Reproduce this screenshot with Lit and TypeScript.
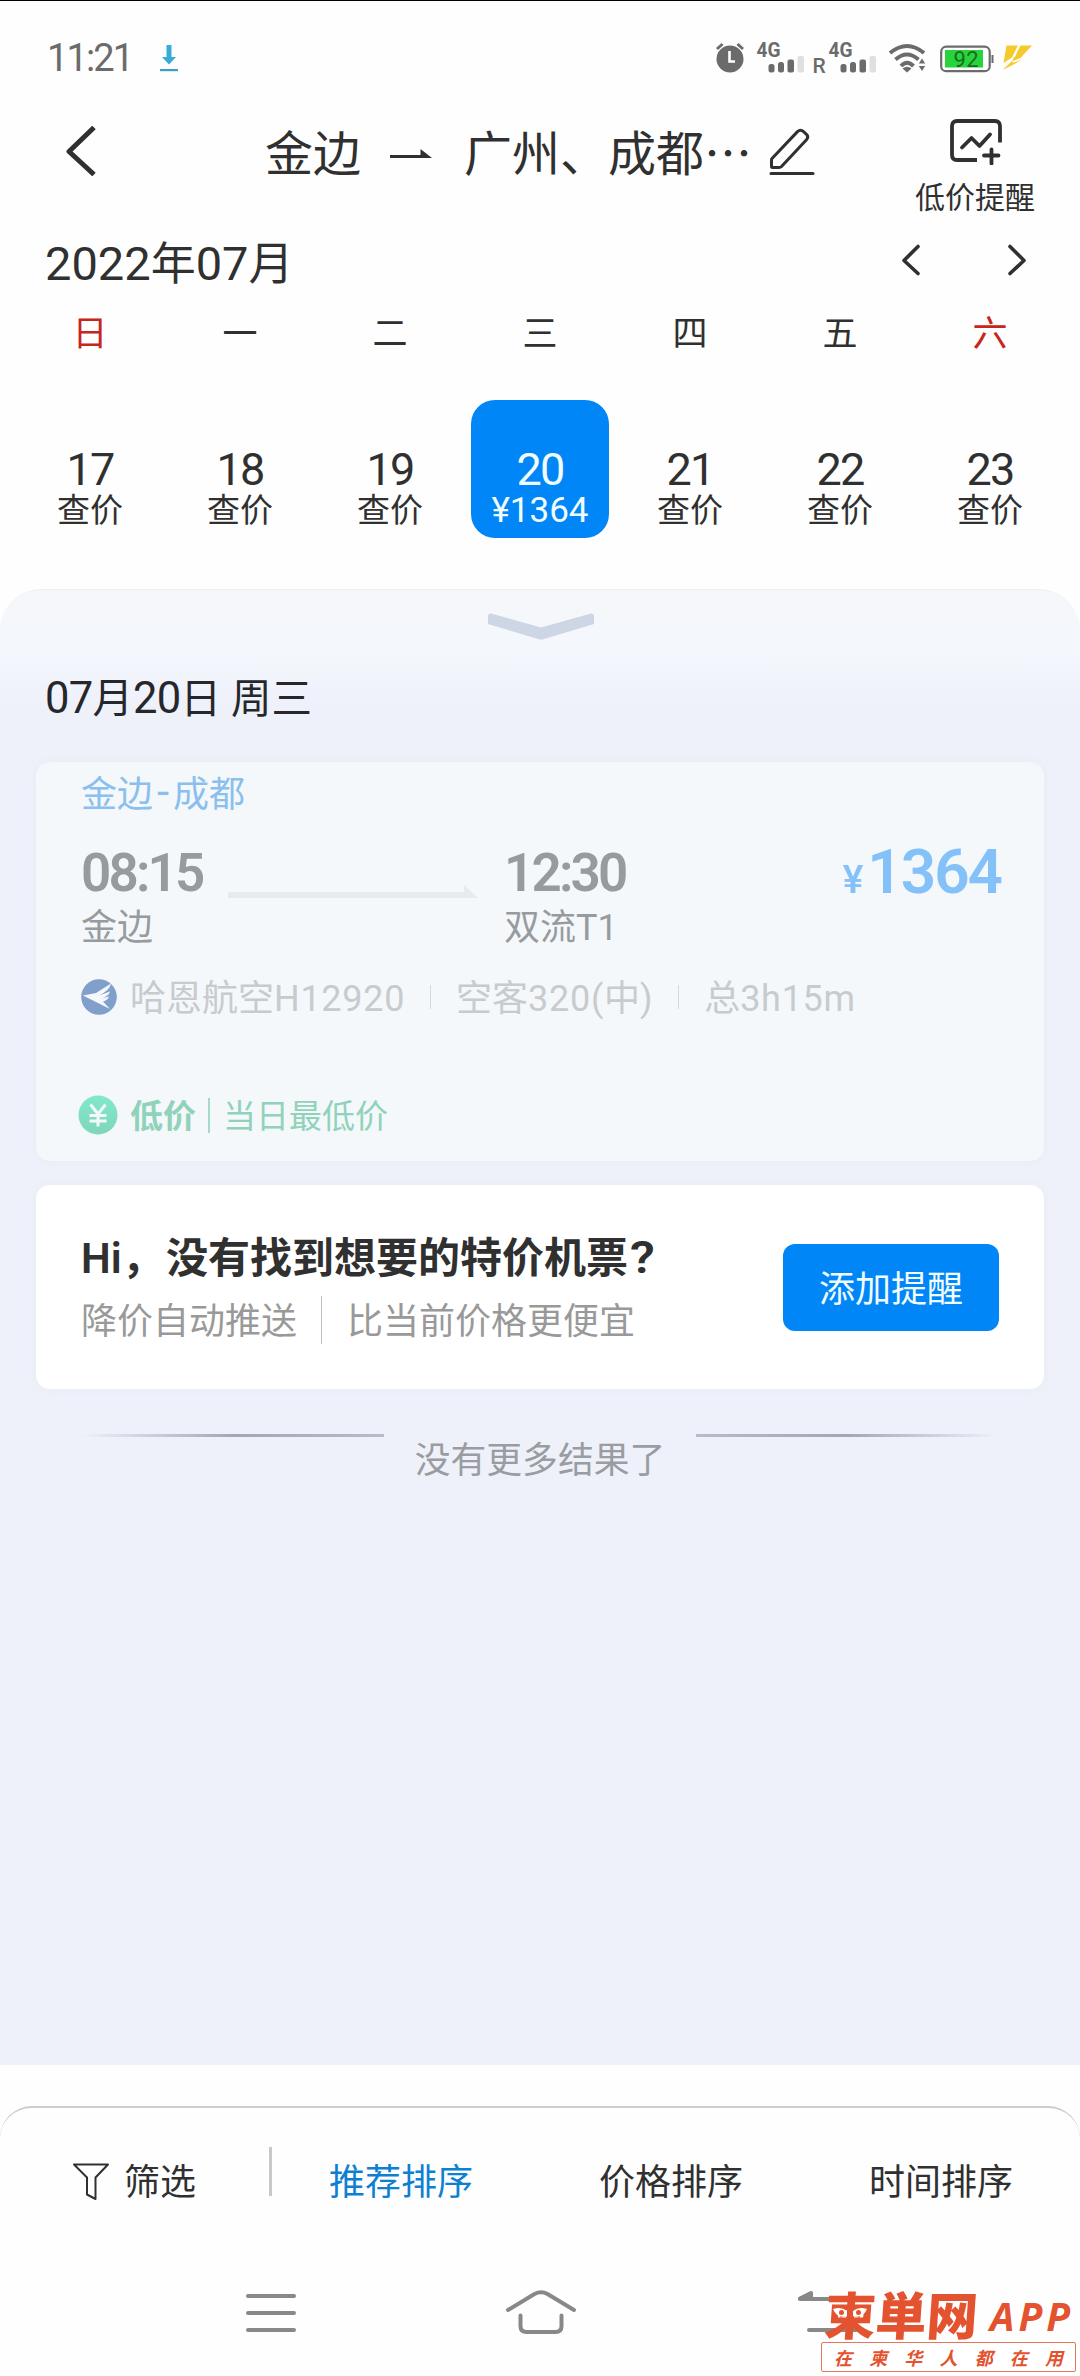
import { LitElement, html, css, svg } from "lit";
import { customElement } from "lit/decorators.js";
import { classMap } from "lit/directives/class-map.js";

interface Day {
  week: string;
  date: string;
  label: string;
  weekend?: boolean;
  selected?: boolean;
}

const DAYS: Day[] = [
  { week: "日", date: "17", label: "查价", weekend: true },
  { week: "一", date: "18", label: "查价" },
  { week: "二", date: "19", label: "查价" },
  { week: "三", date: "20", label: "¥1364", selected: true },
  { week: "四", date: "21", label: "查价" },
  { week: "五", date: "22", label: "查价" },
  { week: "六", date: "23", label: "查价", weekend: true },
];

@customElement("status-bar")
export class StatusBar extends LitElement {
  static styles = css`
    :host {
      display: flex;
      align-items: center;
      height: 114px;
      color: #6b6b6b;
    }
    .time {
      width: 88px;
      margin-left: 47px;
      font-size: 38px;
      letter-spacing: -1.9px;
      line-height: 46px;
    }
    .download {
      margin-left: 24px;
    }
    .icons {
      display: flex;
      margin-left: auto;
      margin-right: 47px;
    }
    svg {
      display: block;
    }
    .net {
      font: 700 21px Roboto, sans-serif;
    }
    .roam {
      font: 500 21px Roboto, sans-serif;
    }
    .pct {
      font: 400 22px Roboto, sans-serif;
    }
  `;

  private signal(x: number) {
    return svg`
      <text class="net" x=${x} y="17.500" textLength="24" lengthAdjust="spacingAndGlyphs" fill="#6b6b6b">4G</text>
      <rect x=${x + 12} y="25" width="6" height="8.500" rx="2.5" fill="#6b6b6b"/>
      <rect x=${x + 21.5} y="23" width="6" height="10.500" rx="2.5" fill="#6b6b6b"/>
      <rect x=${x + 31} y="20.500" width="6.5" height="13" rx="2" fill="#6b6b6b"/>
      <rect x=${x + 41} y="17" width="6.5" height="16.500" rx="2" fill="#e0e0e0"/>`;
  }

  render() {
    return html`
      <span class="time">11:21</span>
      <svg class="download" width="20" height="30" viewBox="0 0 20 30">
        <path d="M7.5 2h5v12h4.5L10 21.500 3 14h4.500z" fill="#38acd4" />
        <rect x="1" y="26" width="18" height="2.200" fill="#3d9fc0" />
      </svg>
      <div class="icons">
        <svg width="322" height="38" viewBox="0 0 322 38">
          <g transform="translate(4 0)">
            <circle cx="15" cy="20" r="13.500" fill="#6b6b6b" />
            <path d="M2 10 7.500 5M22.500 5l5.500 5" stroke="#6b6b6b" stroke-width="3" />
            <path d="M14.500 12v10.500h5.500" stroke="#fff" stroke-width="2.600" fill="none" />
          </g>
          ${this.signal(45.5)}
          <text class="roam" x="101.500" y="33.500" fill="#6b6b6b">R</text>
          ${this.signal(117.5)}
          <g fill="none" stroke="#6b6b6b" stroke-width="4">
            <path d="M179 14Q196 0 213 14" />
            <path d="M184.500 20.500Q196 10.500 207.500 20.500" />
            <path d="M190 27Q196 20.500 202.500 27" />
          </g>
          <path d="M191.500 29.500q4.500-3.500 9 0l-4.500 4z" fill="#6b6b6b" />
          <path d="M211 19.500l3.200 5h-6.400zM211 32l3.200-5h-6.400z" fill="#6b6b6b" />
          <rect x="230.200" y="7.700" width="48.500" height="24.500" rx="5" fill="#fff" stroke="#6b6b6b" stroke-width="2.200" />
          <rect x="234" y="11" width="38" height="17.500" fill="#27d43c" />
          <rect x="280.500" y="16" width="2" height="8" fill="#6b6b6b" />
          <text class="pct" x="242.500" y="28" textLength="25" fill="#1b6b22">92</text>
          <path d="M295.500 6.500H307L301 18.500 292.500 24z" fill="#f4cb2a" />
          <path d="M309.500 6.500H321L309 19.500 311 20.500 303.500 25 291.500 31 301.500 21.500 303 18z" fill="#f4cb2a" />
          <path d="M308.500 5.500l-5.500 12.500M311 19.500l-9.500 3.500" stroke="#fefefe" stroke-width="1.800" />
        </svg>
      </div>
    `;
  }
}

@customElement("route-header")
export class RouteHeader extends LitElement {
  static styles = css`
    :host {
      display: flex;
      align-items: flex-start;
      height: 110px;
      color: #303030;
    }
    svg {
      display: block;
      fill: none;
      stroke: #303030;
    }
    .back {
      margin: 11px 0 0 64px;
    }
    .route {
      display: flex;
      align-items: center;
      height: 74px;
      margin-left: 167px;
      font-family: "Noto Sans CJK SC", sans-serif;
      font-size: 48px;
      line-height: 70px;
      white-space: nowrap;
    }
    .route span {
      height: 74px;
    }
    .arrow {
      margin: 3px 32px 0 29px;
    }
    .to {
      width: 305px;
    }
    .edit {
      margin-top: -3px;
    }
    .alert {
      display: flex;
      flex-direction: column;
      align-items: center;
      width: 122px;
      margin: 3px 0 0 99px;
      font-size: 30px;
      line-height: 42px;
    }
    .alert svg {
      margin: 0 0 12px 2px;
    }
  `;

  render() {
    return html`
      <svg class="back" width="34" height="50" viewBox="0 0 34 50">
        <path d="M30 1.500 5 25.500 30 48.500" stroke-width="5" stroke-linejoin="round" />
      </svg>
      <div class="route">
        <span>金边</span>
        <svg class="arrow" width="42" height="10" viewBox="0 0 42 10">
          <path d="M0 7.500h34" stroke-width="3" />
          <path d="M30.500 0 42 9H30.500z" fill="#303030" stroke="none" />
        </svg>
        <span class="to">广州、成都⋯</span>
        <svg class="edit" width="46" height="48" viewBox="0 0 46 48">
          <path d="M2 46.500h42" stroke-width="3" stroke-linecap="round" />
          <path
            d="M3 31.500 28.500 4.600Q31.500 2 34.500 4.600L37.500 7.300Q40 10 37.500 12.800L12.500 39.500Q11.500 40.500 10 40.500H3.500Q2.500 40.500 2.500 39.300V33Q2.500 32 3 31.500z"
            stroke-width="3"
            stroke-linejoin="round"
          />
        </svg>
      </div>
      <div class="alert">
        <svg width="54" height="47" viewBox="0 0 54 47">
          <g stroke-width="3.800">
            <path d="M51 24.500V8Q51 3 46 3H8Q3 3 3 8V37Q3 42 8 42H28" />
            <path d="M13 29.500 22.500 20 30.500 28 41 16.500" stroke-linejoin="round" stroke-linecap="round" />
            <path d="M42.500 31.500v14M35 37.500h14.500" stroke-linecap="round" />
          </g>
        </svg>
        <span>低价提醒</span>
      </div>
    `;
  }
}

@customElement("week-calendar")
export class WeekCalendar extends LitElement {
  static styles = css`
    :host {
      display: block;
      color: #303030;
    }
    .month {
      display: flex;
      align-items: center;
      height: 74px;
      padding: 0 53px 0 45px;
      font-size: 45px;
      line-height: 77px;
    }
    .num {
      font-size: 47px;
    }
    .nav {
      display: flex;
      gap: 86px;
      margin: -4px 0 0 auto;
    }
    svg {
      display: block;
      fill: none;
      stroke: #303030;
      stroke-width: 3.6;
      stroke-linecap: round;
      stroke-linejoin: round;
    }
    .text {
      height: 74px;
    }
    .grid {
      display: grid;
      grid-template-columns: repeat(7, 150px);
      justify-content: center;
      justify-items: center;
    }
    .week {
      padding-top: 2px;
      font-size: 35px;
      line-height: 68px;
    }
    .weekend {
      color: #c8251c;
    }
    .days {
      margin-top: 31px;
    }
    .day {
      box-sizing: border-box;
      display: flex;
      flex-direction: column;
      align-items: center;
      width: 138px;
      height: 138px;
      padding-top: 49px;
      border-radius: 24px;
    }
    .date {
      font-size: 45px;
      line-height: 42px;
      letter-spacing: -1.8px;
    }
    .label {
      font-size: 33px;
      line-height: 39px;
    }
    .selected {
      background: #0086f6;
      color: #f0fcff;
    }
    .selected .label {
      font-size: 35px;
    }
  `;

  render() {
    return html`
      <div class="month">
        <span class="text"><span class="num">2022</span>年<span class="num">07</span>月</span>
        <div class="nav">
          <svg width="20" height="32" viewBox="0 0 20 32"><path d="M17 2.500 3 16.500 17 29.500" /></svg>
          <svg width="20" height="32" viewBox="0 0 20 32"><path d="M3 2.500 17 16.500 3 29.500" /></svg>
        </div>
      </div>
      <div class="grid">
        ${DAYS.map((d) => html`<span class=${classMap({ week: true, weekend: !!d.weekend })}>${d.week}</span>`)}
      </div>
      <div class="grid days">
        ${DAYS.map(
          (d) => html`<div class=${classMap({ day: true, selected: !!d.selected })}>
            <span class="date">${d.date}</span>
            <span class="label">${d.label}</span>
          </div>`
        )}
      </div>
    `;
  }
}

@customElement("flight-card")
export class FlightCard extends LitElement {
  static styles = css`
    :host {
      box-sizing: border-box;
      display: block;
      height: 399px;
      padding: 9px 45px 0 45px;
      border-radius: 14px;
      background: #f4f8fb;
      box-shadow: 0 0 6px rgba(225, 232, 236, 0.5);
      font-size: 36px;
      white-space: nowrap;
    }
    svg {
      display: block;
    }
    .route {
      color: #8abfee;
      line-height: 48px;
    }
    .dash {
      display: inline-block;
      width: 20px;
      font-size: 44px;
      line-height: 40px;
      text-align: center;
    }
    .times {
      display: flex;
      margin-top: 22px;
      color: #979b9e;
    }
    .stop {
      display: flex;
      flex-direction: column;
      line-height: 47px;
    }
    .from {
      width: 147px;
    }
    .clock {
      font-size: 53px;
      font-weight: 600;
      line-height: 64px;
      letter-spacing: -2.8px;
    }
    .line {
      margin: 44px 26px 0 0;
    }
    .price {
      margin: -1px -2px 0 auto;
      color: #84c1f8;
      font-weight: 600;
      font-size: 62px;
      line-height: 64px;
      letter-spacing: -2px;
    }
    .yen {
      margin-right: 6px;
      font-size: 39px;
      font-weight: 500;
    }
    .meta {
      display: flex;
      align-items: center;
      height: 46px;
      margin-top: 22px;
      color: #c8cbce;
      line-height: 50px;
    }
    .meta span {
      height: 46px;
    }
    .lat {
      letter-spacing: 0.7px;
    }
    .airline {
      margin-left: 13px;
    }
    .sep {
      width: 1px;
      height: 24px;
      margin: 0 25px 0 25px;
      background: #d5d9dc;
    }
    .tag {
      display: flex;
      align-items: center;
      height: 46px;
      margin: 72px 0 0 -3px;
      font-size: 33px;
      line-height: 49px;
      color: #90d2ba;
    }
    .tag span {
      height: 46px;
    }
    .low {
      margin-left: 12px;
      font-weight: 700;
    }
    .bar {
      width: 2px;
      height: 35px;
      margin: 0 13px 0 12px;
      background: #a5dac6;
    }
  `;

  render() {
    return html`
      <div class="route">金边<span class="dash">-</span>成都</div>
      <div class="times">
        <div class="stop from"><span class="clock">08:15</span><span>金边</span></div>
        <svg class="line" width="250" height="14" viewBox="0 0 250 14">
          <path d="M0 7h236V0l14 13H0z" fill="#e7ebed" />
        </svg>
        <div class="stop"><span class="clock">12:30</span><span>双流T1</span></div>
        <div class="price"><span class="yen">¥</span>1364</div>
      </div>
      <div class="meta">
        <svg width="36" height="36" viewBox="0 0 36 36">
          <circle cx="18" cy="18" r="17.800" fill="#809fcb" />
          <path d="M2 16.500 15 14 30 4.500Q29 11 18 16.500L29 12.500Q28 17 20 19.500L28 17.500Q27 21 22 22.500L29 30Z" fill="#f4f8fb" />
        </svg>
        <span class="airline">哈恩航空<span class="lat">H12920</span></span>
        <i class="sep"></i>
        <span>空客<span class="lat">320(</span>中<span class="lat">)</span></span>
        <i class="sep"></i>
        <span>总<span class="lat">3h15m</span></span>
      </div>
      <div class="tag">
        <svg width="40" height="40" viewBox="0 0 40 40">
          <defs>
            <linearGradient id="coin" x1="0" y1="0" x2="0" y2="1">
              <stop offset="0" stop-color="#82e8cc" />
              <stop offset="1" stop-color="#7fd6ba" />
            </linearGradient>
          </defs>
          <circle cx="20" cy="20" r="19.500" fill="url(#coin)" />
          <path d="M12.500 9.500 20 19 27.500 9.500M20 19V31.500M11.500 20.500h17M11.500 26h17" fill="none" stroke="#f4f8fb" stroke-width="3" />
        </svg>
        <span class="low">低价</span>
        <i class="bar"></i>
        <span>当日最低价</span>
      </div>
    `;
  }
}

@customElement("remind-card")
export class RemindCard extends LitElement {
  static styles = css`
    :host {
      box-sizing: border-box;
      display: flex;
      justify-content: space-between;
      height: 204px;
      padding: 43px 45px 0 45px;
      border-radius: 14px;
      background: #fff;
      box-shadow: 0 0 6px rgba(225, 232, 236, 0.5);
      white-space: nowrap;
    }
    .title {
      height: 60px;
      color: #303030;
      font-size: 42px;
      font-weight: 600;
      line-height: 62px;
    }
    .hi {
      display: inline-block;
      width: 85px;
      white-space: nowrap;
    }
    .ask {
      display: inline-block;
      font-size: 45px;
      transform-origin: left;
      transform: translateX(2px) scaleX(1.12);
      line-height: 50px;
    }
    .sub {
      display: flex;
      align-items: center;
      height: 48px;
      margin-top: 8px;
      color: #999;
      font-size: 36px;
      line-height: 53px;
    }
    .sub span {
      height: 48px;
    }
    .sep {
      width: 1px;
      height: 48px;
      margin: 0 25px 0 24px;
      background: #bdbdbd;
    }
    .button {
      width: 216px;
      height: 87px;
      margin-top: 16px;
      border-radius: 12px;
      background: #0086f6;
      color: #f0fcff;
      font-size: 36px;
      line-height: 93px;
      text-align: center;
    }
  `;

  render() {
    return html`
      <div>
        <div class="title"><span class="hi">Hi，</span>没有找到想要的特价机票<span class="ask">?</span></div>
        <div class="sub"><span>降价自动推送</span><i class="sep"></i><span>比当前价格更便宜</span></div>
      </div>
      <div class="button">添加提醒</div>
    `;
  }
}

@customElement("sort-bar")
export class SortBar extends LitElement {
  static styles = css`
    :host {
      box-sizing: border-box;
      display: flex;
      height: 150px;
      margin-top: 41px;
      border-top: 2px solid #cdcdcd;
      border-radius: 32px 32px 0 0;
      color: #303030;
      font-size: 36px;
      line-height: 150px;
      white-space: nowrap;
    }
    .filter {
      box-sizing: border-box;
      display: flex;
      align-items: center;
      width: 269px;
      padding-left: 72px;
      height: 148px;
    }
    .filter svg {
      display: block;
      margin-right: 14px;
    }
    .filter span {
      height: 148px;
    }
    .sep {
      width: 3px;
      height: 49px;
      margin: 39px -6px 0 0;
      background: #c8c8c8;
    }
    .item {
      width: 270px;
      text-align: center;
    }
    .active {
      color: #0d80d2;
    }
  `;

  render() {
    return html`
      <div class="filter">
        <svg width="38" height="38" viewBox="0 0 38 38" fill="none" stroke="#303030" stroke-width="2">
          <path d="M2 1.500H36L23.500 14.500V36L15 31.500V14.500z" stroke-linejoin="round" />
        </svg>
        <span>筛选</span>
      </div>
      <i class="sep"></i>
      <span class="item active">推荐排序</span>
      <span class="item">价格排序</span>
      <span class="item">时间排序</span>
    `;
  }
}

@customElement("brand-mark")
export class BrandMark extends LitElement {
  static styles = css`
    :host {
      display: block;
      width: 256px;
      height: 86px;
      color: #e4532f;
    }
    .top {
      position: relative;
      display: flex;
      height: 54px;
      white-space: nowrap;
    }
    .name {
      width: 163px;
      margin-left: 4px;
      font: 900 51px/50px "Noto Sans CJK SC", sans-serif;
      transform: skewX(-4deg);
    }
    .eyes {
      position: absolute;
      left: 10px;
      top: 18px;
    }
    .app {
      padding-top: 8px;
      margin-left: 2px;
      font: italic 700 39px/40px "Open Sans", sans-serif;
      letter-spacing: 4px;
    }
    .slogan {
      box-sizing: border-box;
      display: flex;
      justify-content: space-between;
      width: 255px;
      height: 30px;
      padding: 0 12px;
      border: 1px solid #e4765a;
      border-radius: 2px;
      background: #fff;
      font: italic 700 18px/28px "Noto Sans CJK SC", sans-serif;
    }
  `;

  render() {
    return html`
      <div class="top">
        <span class="name">柬単网</span>
        <svg class="eyes" width="38" height="14" viewBox="0 0 38 14">
          <path d="M2 3Q10 0 16 5V10Q6 13 2 3zM36 3Q28 0 22 5V10Q32 13 36 3z" fill="#fff" />
          <circle cx="10.500" cy="6.500" r="2.500" fill="#e4532f" />
          <circle cx="27.500" cy="6.500" r="2.500" fill="#e4532f" />
        </svg>
        <span class="app">APP</span>
      </div>
      <div class="slogan">${[..."在柬华人都在用"].map((c) => html`<span>${c}</span>`)}</div>
    `;
  }
}

@customElement("app-root")
export class AppRoot extends LitElement {
  static styles = css`
    :host {
      position: relative;
      box-sizing: border-box;
      display: block;
      width: 1080px;
      height: 2376px;
      overflow: hidden;
      border-top: 1px solid #000;
      background: #fefefe;
      font-family: Roboto, "Noto Sans CJK SC", sans-serif;
    }
    svg {
      display: block;
    }
    .panel {
      box-sizing: border-box;
      height: 1476px;
      margin-top: 51px;
      padding: 23px 36px 0;
      border-top: 1px solid #efeff2;
      border-radius: 42px 42px 0 0;
      background: linear-gradient(#f5f7fa 0, #f4f7fc 60px, #eef1fa 115px, #eef1fa 100%);
    }
    .handle {
      margin: 0 auto;
      transform: translateX(1px);
    }
    .date {
      margin: 29px 0 33px 9px;
      color: #26272b;
      font-size: 40.5px;
      line-height: 60px;
    }
    .num {
      font-size: 43.5px;
      letter-spacing: -0.7px;
    }
    remind-card {
      margin-top: 24px;
    }
    .end {
      display: flex;
      justify-content: space-between;
      padding: 0 46px;
      margin-top: 45px;
      color: #999da1;
      font-size: 35.800px;
      line-height: 55px;
    }
    .rule {
      width: 302px;
      height: 3px;
      background: linear-gradient(90deg, rgba(160, 163, 175, 0), #a4a7b3 50%, #b9bcc6);
    }
    .rule.right {
      background: linear-gradient(270deg, rgba(160, 163, 175, 0), #a4a7b3 50%, #b9bcc6);
    }
    .end span {
      white-space: nowrap;
    }
    .system {
      display: flex;
      height: 60px;
      margin-top: 27px;
    }
    .system svg {
      fill: none;
      stroke: #888;
      stroke-width: 4;
      stroke-linecap: round;
      stroke-linejoin: round;
    }
    .menu {
      margin-left: 244px;
    }
    .home {
      margin-left: 206px;
    }
    .return {
      margin-left: 218px;
    }
    brand-mark {
      position: absolute;
      left: 821px;
      top: 2287px;
    }
  `;

  render() {
    return html`
      <status-bar></status-bar>
      <route-header></route-header>
      <week-calendar></week-calendar>
      <div class="panel">
        <svg class="handle" width="106" height="27" viewBox="0 0 106 27">
          <path d="M0 3Q0 0 3 .5L53 14.500 103 .5Q106 0 106 3V11L56 26Q53 27 50 26L0 11z" fill="#ccd6e5" />
        </svg>
        <div class="date"><span class="num">07</span>月<span class="num">20</span>日 周三</div>
        <flight-card></flight-card>
        <remind-card></remind-card>
        <div class="end">
          <i class="rule"></i>
          <span>没有更多结果了</span>
          <i class="rule right"></i>
        </div>
      </div>
      <sort-bar></sort-bar>
      <div class="system">
        <svg class="menu" width="54" height="60" viewBox="0 0 54 60"><path d="M4 13H50M4 30H50M4 47H50" /></svg>
        <svg class="home" width="74" height="60" viewBox="0 0 74 60">
          <path d="M4 27 30.500 11Q37 7.500 43.500 11L70 27" />
          <path d="M16.500 32.500V43Q16.500 49 22.500 49H51.500Q57.500 49 57.500 43V32.500" />
        </svg>
        <svg class="return" width="80" height="60" viewBox="0 0 80 60">
          <path d="M4 16H70M13 47H60" />
          <path d="M4 15.500 15 10V15.500z" fill="#888" />
        </svg>
      </div>
      <brand-mark></brand-mark>
    `;
  }
}
